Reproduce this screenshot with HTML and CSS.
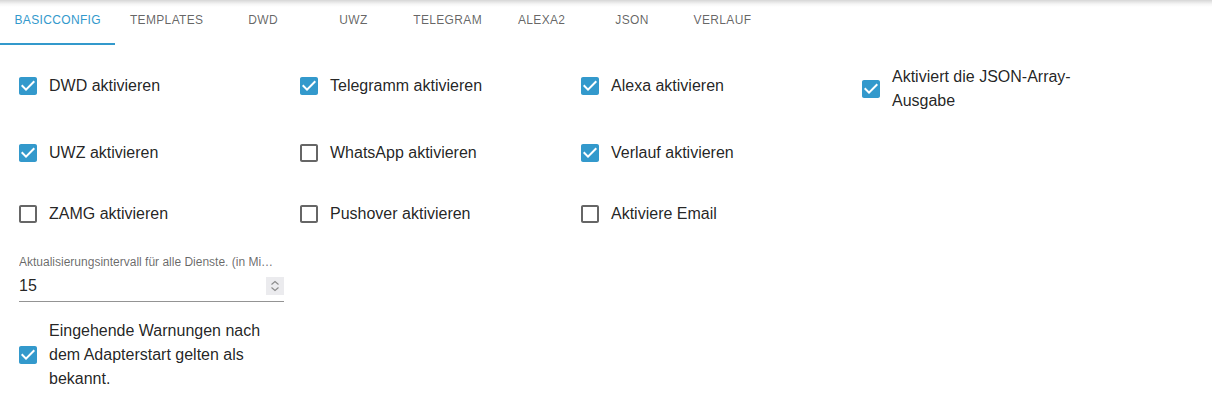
FILE: index.html
```html
<!DOCTYPE html>
<html lang="de">
<head>
<meta charset="utf-8">
<title>Basic config</title>
<link rel="stylesheet" href="styles.css">
</head>
<body>
<nav class="tabs">
  <div class="tab active">basicconfig</div>
  <div class="tab">templates</div>
  <div class="tab">dwd</div>
  <div class="tab">uwz</div>
  <div class="tab">telegram</div>
  <div class="tab">alexa2</div>
  <div class="tab">json</div>
  <div class="tab">verlauf</div>
</nav>
<main class="content">
  <div class="grid">
    <label class="check"><svg class="box on" viewBox="0 0 24 24"><path d="M19 3H5c-1.11 0-2 .9-2 2v14c0 1.1.89 2 2 2h14c1.11 0 2-.9 2-2V5c0-1.1-.89-2-2-2zm-9 14l-5-5 1.41-1.41L10 14.170l7.59-7.59L19 8l-9 9z"/></svg><span>DWD aktivieren</span></label>
    <label class="check"><svg class="box on" viewBox="0 0 24 24"><path d="M19 3H5c-1.11 0-2 .9-2 2v14c0 1.1.89 2 2 2h14c1.11 0 2-.9 2-2V5c0-1.1-.89-2-2-2zm-9 14l-5-5 1.41-1.41L10 14.17l7.59-7.59L19 8l-9 9z"/></svg><span>Telegramm aktivieren</span></label>
    <label class="check"><svg class="box on" viewBox="0 0 24 24"><path d="M19 3H5c-1.11 0-2 .9-2 2v14c0 1.1.89 2 2 2h14c1.11 0 2-.9 2-2V5c0-1.1-.89-2-2-2zm-9 14l-5-5 1.41-1.41L10 14.17l7.59-7.59L19 8l-9 9z"/></svg><span>Alexa aktivieren</span></label>
    <label class="check"><svg class="box on" viewBox="0 0 24 24"><path d="M19 3H5c-1.11 0-2 .9-2 2v14c0 1.1.89 2 2 2h14c1.11 0 2-.9 2-2V5c0-1.1-.89-2-2-2zm-9 14l-5-5 1.41-1.41L10 14.17l7.59-7.59L19 8l-9 9z"/></svg><span>Aktiviert die JSON-Array-Ausgabe</span></label>

    <label class="check"><svg class="box on" viewBox="0 0 24 24"><path d="M19 3H5c-1.11 0-2 .9-2 2v14c0 1.1.89 2 2 2h14c1.11 0 2-.9 2-2V5c0-1.1-.89-2-2-2zm-9 14l-5-5 1.41-1.41L10 14.17l7.59-7.59L19 8l-9 9z"/></svg><span>UWZ aktivieren</span></label>
    <label class="check"><svg class="box off" viewBox="0 0 24 24"><path d="M19 5v14H5V5h14m0-2H5c-1.1 0-2 .9-2 2v14c0 1.1.9 2 2 2h14c1.1 0 2-.9 2-2V5c0-1.1-.9-2-2-2z"/></svg><span>WhatsApp aktivieren</span></label>
    <label class="check"><svg class="box on" viewBox="0 0 24 24"><path d="M19 3H5c-1.11 0-2 .9-2 2v14c0 1.1.89 2 2 2h14c1.11 0 2-.9 2-2V5c0-1.1-.89-2-2-2zm-9 14l-5-5 1.41-1.41L10 14.17l7.59-7.59L19 8l-9 9z"/></svg><span>Verlauf aktivieren</span></label>
    <div class="empty"></div>

    <label class="check"><svg class="box off" viewBox="0 0 24 24"><path d="M19 5v14H5V5h14m0-2H5c-1.1 0-2 .9-2 2v14c0 1.1.9 2 2 2h14c1.1 0 2-.9 2-2V5c0-1.1-.9-2-2-2z"/></svg><span>ZAMG aktivieren</span></label>
    <label class="check"><svg class="box off" viewBox="0 0 24 24"><path d="M19 5v14H5V5h14m0-2H5c-1.1 0-2 .9-2 2v14c0 1.1.9 2 2 2h14c1.1 0 2-.9 2-2V5c0-1.1-.9-2-2-2z"/></svg><span>Pushover aktivieren</span></label>
    <label class="check"><svg class="box off" viewBox="0 0 24 24"><path d="M19 5v14H5V5h14m0-2H5c-1.1 0-2 .9-2 2v14c0 1.1.9 2 2 2h14c1.1 0 2-.9 2-2V5c0-1.1-.9-2-2-2z"/></svg><span>Aktiviere Email</span></label>
  </div>

  <div class="field">
    <div class="field-label">Aktualisierungsintervall für alle Dienste. (in Minuten)</div>
    <div class="field-input">
      <span class="value">15</span>
      <span class="spin"><svg viewBox="0 0 18 18"><path d="M5.5 7.5L9 4.5l3.5 3M5.5 10.5L9 13.5l3.5-3" fill="none" stroke="#8a8a8a" stroke-width="1.1"/></svg></span>
    </div>
  </div>

  <label class="check wide"><svg class="box on" viewBox="0 0 24 24"><path d="M19 3H5c-1.11 0-2 .9-2 2v14c0 1.1.89 2 2 2h14c1.11 0 2-.9 2-2V5c0-1.1-.89-2-2-2zm-9 14l-5-5 1.41-1.41L10 14.17l7.59-7.59L19 8l-9 9z"/></svg><span>Eingehende Warnungen nach dem Adapterstart gelten als bekannt.</span></label>
</main>
</body>
</html>
```

FILE: styles.css
```css
html, body {
  margin: 0;
  padding: 0;
  background: #fff;
  font-family: "Liberation Sans", Arial, sans-serif;
  color: rgba(0, 0, 0, 0.87);
}

.tabs {
  display: flex;
  height: 45px;
  background: linear-gradient(to bottom, rgba(0, 0, 0, 0.16), rgba(0, 0, 0, 0.04) 4px, rgba(0, 0, 0, 0) 7px), #fff;
}

.tab {
  box-sizing: border-box;
  min-width: 90.4px;
  padding: 13px 14.5px 0;
  height: 45px;
  text-align: center;
  text-transform: uppercase;
  font-size: 12px;
  line-height: 14px;
  letter-spacing: 0.34px;
  color: rgba(0, 0, 0, 0.62);
}

.tab.active {
  color: #3399cc;
  border-bottom: 2px solid #3399cc;
}

.content {
  padding: 20px 0 0 16px;
}

.grid {
  display: grid;
  grid-template-columns: repeat(4, 281px);
  row-gap: 19px;
  align-items: start;
}

.check {
  display: flex;
  align-items: center;
  width: 264px;
  min-height: 42px;
  font-size: 16px;
  line-height: 24px;
}

.check span {
  flex: 1;
}

.box {
  width: 24px;
  height: 24px;
  flex: none;
  margin-right: 9px;
}

.box.on { fill: #3399cc; }
.box.off { fill: rgba(0, 0, 0, 0.6); }

.field {
  width: 265px;
  margin: 20px 0 0 3px;
}

.field-label {
  font-size: 12px;
  line-height: 14px;
  color: rgba(0, 0, 0, 0.6);
  white-space: nowrap;
  overflow: hidden;
  text-overflow: ellipsis;
  width: 259px;
}

.field-input {
  display: flex;
  align-items: center;
  justify-content: space-between;
  padding: 6px 0 6px;
  border-bottom: 1px solid rgba(0, 0, 0, 0.42);
  font-size: 16px;
  line-height: 19px;
}

.spin {
  width: 18px;
  height: 18px;
  margin-top: 2px;
  background: #ebebee;
  display: flex;
}

.spin svg {
  width: 18px;
  height: 18px;
}

.check.wide {
  margin-top: 17px;
  min-height: 72px;
}
```
